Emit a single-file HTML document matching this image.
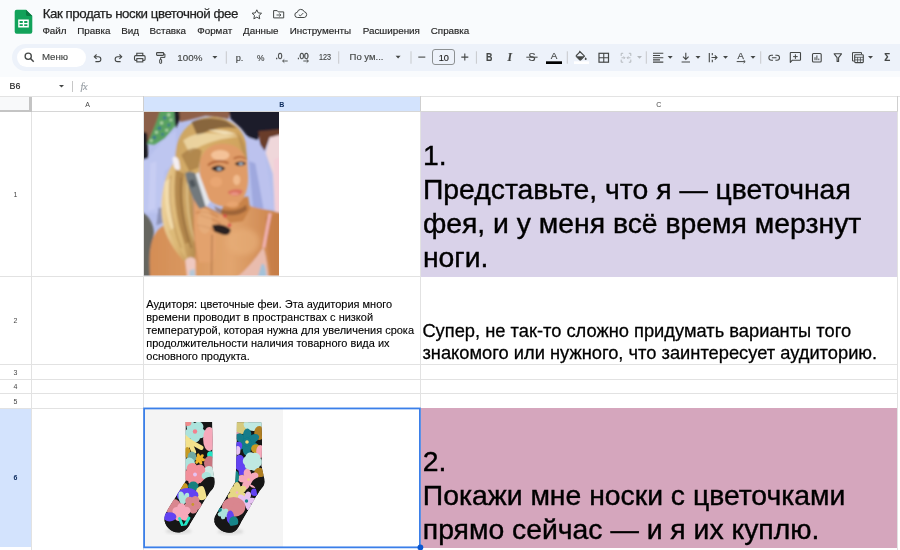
<!DOCTYPE html>
<html lang="ru">
<head>
<meta charset="utf-8">
<title>Как продать носки цветочной фее</title>
<style>
*{box-sizing:border-box;margin:0;padding:0}
html,body{width:900px;height:550px;overflow:hidden;background:#fff}
body{position:relative;will-change:transform;font-family:"Liberation Sans",sans-serif;color:#1f1f1f}
.abs{position:absolute}
#chrome{position:absolute;left:0;top:0;width:900px;height:77px;background:#f9fbfd}
#title{position:absolute;left:42.8px;top:5.9px;font-size:13.3px;line-height:16px;color:#1f1f1f;white-space:nowrap;letter-spacing:-0.46px;-webkit-text-stroke:0.25px #1f1f1f}
#menu span{position:absolute;top:24.7px;-webkit-text-stroke:0.15px #1f1f1f;font-size:9.85px;line-height:12px;color:#1f1f1f;white-space:nowrap}
#toolbar{position:absolute;left:11.5px;top:44px;width:1000px;height:27px;border-radius:13.5px;background:#edf2fa}
#search{position:absolute;left:17px;top:47.5px;width:69px;height:19px;border-radius:9.5px;background:#fff}
.tb{position:absolute;line-height:12px;color:#444746;white-space:nowrap;-webkit-text-stroke-width:0.15px}
.hl{position:absolute;background:#d3e3fd}
.ch{position:absolute;top:99.5px;font-size:7px;line-height:9px;color:#444;width:20px;margin-left:-10px;text-align:center}
.rh{position:absolute;left:5px;width:21px;font-size:7px;line-height:9px;color:#444;text-align:center;margin-top:-4.5px}
.gl{position:absolute;background:#e2e2e2}
.cell{position:absolute;white-space:nowrap;color:#000}
</style>
</head>
<body>
<div id="chrome"></div>
<div id="title">Как продать носки цветочной фее</div>
<div id="menu"><span style="left:42.4px">Файл</span><span style="left:77.2px">Правка</span><span style="left:121.2px">Вид</span><span style="left:149.5px">Вставка</span><span style="left:197.2px">Формат</span><span style="left:243px">Данные</span><span style="left:289.8px">Инструменты</span><span style="left:362.7px">Расширения</span><span style="left:430.7px">Справка</span></div>
<div id="toolbar"></div>
<div id="search"></div>

<div class="tb" style="left:41.9px;top:51px;font-size:9.7px">Меню</div>
<div class="tb" style="left:177.3px;top:51.8px;font-size:9.8px">100%</div>
<div class="tb" style="left:235.7px;top:51.5px;font-size:9.2px">р.</div>
<div class="tb" style="left:257px;top:51.5px;font-size:8.4px">%</div>
<div class="tb" style="left:275.5px;top:49.6px;font-size:8.4px;-webkit-text-stroke:0.35px #444746">.0</div>
<div class="tb" style="left:297.2px;top:49.6px;font-size:8.4px;-webkit-text-stroke:0.35px #444746;letter-spacing:-0.1px">.00</div>
<div class="tb" style="left:319.3px;top:51px;font-size:8.6px;transform:scaleX(0.84);transform-origin:0 0">123</div>
<div class="tb" style="left:349.6px;top:51.3px;font-size:9.5px">По ум...</div>
<div class="abs" style="left:432.3px;top:49.3px;width:22.4px;height:15.8px;border:1px solid #8d9193;border-radius:3px"></div>
<div class="tb" style="left:438.7px;top:51.6px;font-size:9.2px;color:#1f1f1f">10</div>
<div class="tb" style="left:485.9px;top:51.4px;font-size:11.1px;font-weight:bold;transform:scaleX(0.8);transform-origin:0 0">B</div>
<div class="tb" style="left:507.6px;top:52px;font-size:11.6px;font-style:italic;font-weight:bold;font-family:'Liberation Serif',serif">I</div>
<div class="tb" style="left:528.3px;top:51.4px;font-size:11px">S</div>
<div class="tb" style="left:550.7px;top:49.5px;font-size:9.9px">A</div>
<div class="tb" style="left:737.4px;top:50.3px;font-size:9.6px">A</div>
<div class="tb" style="left:884.2px;top:51.6px;font-size:10px;font-weight:bold">Σ</div>
<div class="tb" style="left:9.6px;top:80.3px;font-size:8.9px;color:#1f1f1f">B6</div>
<div class="tb" style="left:80.5px;top:81px;font-size:10.5px;color:#9aa0a6;font-style:italic;font-family:'Liberation Serif',serif;letter-spacing:-0.3px">fx</div>
<svg class="abs" style="left:0;top:0" width="900" height="96" viewBox="0 0 900 96"><path d="M16.7 9.8h9.3l6.3 6.3v15.6a2 2 0 0 1-2 2H16.7a2 2 0 0 1-2-2V11.8a2 2 0 0 1 2-2z" fill="#12a25a"/>
<path d="M26 9.8l6.3 6.3h-4.6a1.7 1.7 0 0 1-1.7-1.7z" fill="#0b7a43"/>
<path d="M18.2 19.6h10.6v7.9H18.2z M19.6 21v1.9h3.2V21z M24.2 21v1.9h3.2V21z M19.6 24.2v1.9h3.2v-1.9z M24.2 24.2v1.9h3.2v-1.9z" fill="#fff" fill-rule="evenodd"/>
<path d="M256.8 9.8l1.45 3.05 3.3.4-2.45 2.25.65 3.3-2.95-1.65-2.95 1.65.65-3.3-2.45-2.25 3.3-.4z" fill="none" stroke="#444746" stroke-width="1" stroke-linejoin="round"/>
<path d="M273.6 10.6h3.6l1.1 1.3h5.4v6h-10.1z" fill="none" stroke="#444746" stroke-width="1" stroke-linejoin="round"/>
<path d="M276.5 15h4.2 M279.3 13.4l1.6 1.6-1.6 1.6" fill="none" stroke="#444746" stroke-width="0.9"/>
<path d="M297.6 17.5a2.6 2.6 0 0 1-.3-5.2 3.6 3.6 0 0 1 6.9-.6 2.95 2.95 0 0 1 .1 5.8z" fill="none" stroke="#444746" stroke-width="1" stroke-linejoin="round"/>
<path d="M298.8 14.6l1.5 1.4 3-3" fill="none" stroke="#444746" stroke-width="0.9"/>
<circle cx="28.2" cy="56.2" r="3.1" fill="none" stroke="#444746" stroke-width="1.3"/><path d="M30.5 58.5l3.2 3.2" stroke="#444746" stroke-width="1.5" fill="none"/>
<path d="M94.5 56.7h3.9a2.45 2.45 0 0 1 0 4.9h-3" fill="none" stroke="#444746" stroke-width="1.1"/><path d="M96.6 54.5l-2.3 2.2 2.3 2.2" fill="none" stroke="#444746" stroke-width="1.1"/>
<path d="M121.5 56.7h-3.9a2.45 2.45 0 0 0 0 4.9h3" fill="none" stroke="#444746" stroke-width="1.1"/><path d="M119.4 54.5l2.3 2.2-2.3 2.2" fill="none" stroke="#444746" stroke-width="1.1"/>
<path d="M136.8 55.6v-2.4h6v2.4" fill="none" stroke="#444746" stroke-width="1.1"/><rect x="134.5" y="55.6" width="10.6" height="4.8" rx="1.2" fill="none" stroke="#444746" stroke-width="1.1"/><rect x="136.8" y="58.6" width="6" height="3.3" fill="#edf2fa" stroke="#444746" stroke-width="1.1"/>
<rect x="156.6" y="52.6" width="7" height="2.8" rx="0.6" fill="none" stroke="#444746" stroke-width="1.1"/><path d="M163.6 54h1.3v3.4h-4.3v2" fill="none" stroke="#444746" stroke-width="1"/><rect x="159.7" y="59.4" width="1.9" height="3.9" rx="0.4" fill="none" stroke="#444746" stroke-width="1"/>
<polygon points="212.4,56.0 217.4,56.0 214.9,58.7" fill="#444746"/>
<rect x="225.8" y="51.3" width="1" height="12.4" fill="#c7c9cc"/>
<rect x="338.2" y="51.3" width="1" height="12.4" fill="#c7c9cc"/>
<rect x="410.5" y="51.3" width="1" height="12.4" fill="#c7c9cc"/>
<rect x="475.9" y="51.3" width="1" height="12.4" fill="#c7c9cc"/>
<rect x="566.8" y="51.3" width="1" height="12.4" fill="#c7c9cc"/>
<rect x="645.8" y="51.3" width="1" height="12.4" fill="#c7c9cc"/>
<rect x="760.2" y="51.3" width="1" height="12.4" fill="#c7c9cc"/>
<path d="M287.7 61h-5 M284.3 59.4l-1.7 1.6 1.7 1.6" fill="none" stroke="#444746" stroke-width="0.9"/>
<path d="M303.3 61h5 M306.7 59.4l1.7 1.6-1.7 1.6" fill="none" stroke="#444746" stroke-width="0.9"/>
<polygon points="395.6,55.7 400.6,55.7 398.1,58.400000000000006" fill="#444746"/>
<path d="M418.3 57.1h7" stroke="#444746" stroke-width="1.1"/>
<path d="M461.3 57.1h7 M464.8 53.6v7" stroke="#444746" stroke-width="1.1"/>
<path d="M526.3 57.2h11.3" stroke="#444746" stroke-width="1"/>
<rect x="546" y="61.3" width="16" height="2.7" fill="#000"/>
<path d="M579.3 51l5.2 5.2-3.7 3.7a0.8 0.8 0 0 1-1.1 0l-3.3-3.3a0.8 0.8 0 0 1 0-1.1l3.8-3.8" fill="none" stroke="#444746" stroke-width="1.1" stroke-linejoin="round"/>
<path d="M576.3 56.2h8l-3.6 3.6a0.8 0.8 0 0 1-1.1 0z" fill="#444746"/>
<path d="M585.7 57.3c.6.8 1 1.3 1 1.8a1 1 0 0 1-2 0c0-.5.4-1 1-1.8z" fill="#444746"/>
<rect x="574" y="61.3" width="15" height="2.7" fill="#fff"/>
<rect x="599" y="53.3" width="9.5" height="8.9" fill="none" stroke="#444746" stroke-width="1.2"/><path d="M603.75 53.3v8.9 M599 57.75h9.5" stroke="#444746" stroke-width="1.1"/>
<path d="M623.2 53.3h-2v2.6 M621.2 59.6v2.6h2 M628.8 53.3h2v2.6 M630.8 59.6v2.6h-2" fill="none" stroke="#b4b9bd" stroke-width="1"/><path d="M621.5 57.75h3.3 M623.6 56.4l1.3 1.35-1.3 1.35 M630.5 57.75h-3.3 M628.4 56.4l-1.3 1.35 1.3 1.35" fill="none" stroke="#b4b9bd" stroke-width="0.9"/>
<polygon points="637,56 642,56 639.5,58.7" fill="#b4b9bd"/>
<path d="M653 53.3h10.3 M653 55.5h7 M653 57.7h10.3 M653 59.9h7 M653 62.1h10.3" stroke="#444746" stroke-width="1.1"/>
<polygon points="667.7,56.0 672.7,56.0 670.2,58.7" fill="#444746"/>
<path d="M685.8 52.8v6.4 M683 56.6l2.8 2.8 2.8-2.8 M681.6 62h8.4" fill="none" stroke="#444746" stroke-width="1.1"/>
<polygon points="695.5,56.0 700.5,56.0 698.0,58.7" fill="#444746"/>
<path d="M709.3 53v9.2 M712.3 53v2.2 M712.3 59.8v2.4 M711.5 57.5h5.3 M714.8 55.4l2.2 2.1-2.2 2.1" fill="none" stroke="#444746" stroke-width="1.1"/>
<polygon points="723,56.0 728.0,56.0 725.5,58.7" fill="#444746"/>
<path d="M736.7 61.6h8 M743.6 60.2l1.6 1.4-1.6 1.4" fill="none" stroke="#444746" stroke-width="1"/>
<polygon points="750.5,56.0 755.5,56.0 753.0,58.7" fill="#444746"/>
<path d="M773 55.2h-1.6a2.5 2.5 0 0 0 0 5h1.6 M775.4 55.2h1.6a2.5 2.5 0 0 1 0 5h-1.6 M771.9 57.7h4.6" fill="none" stroke="#444746" stroke-width="1.1"/>
<path d="M790.3 62.3v-9.2a.6.6 0 0 1 .6-.6h9a.6.6 0 0 1 .6.6v6.6a.6.6 0 0 1-.6.6h-7.8z" fill="none" stroke="#444746" stroke-width="1.1" stroke-linejoin="round"/><path d="M795.4 54.3v4.6 M793.1 56.6h4.6" stroke="#444746" stroke-width="1"/>
<rect x="812.5" y="53.5" width="8.7" height="8.5" rx="1" fill="none" stroke="#444746" stroke-width="1.1"/><path d="M815 60.2v-3 M816.9 60.2v-4.8 M818.8 60.2v-1.6" stroke="#444746" stroke-width="1"/>
<path d="M834.2 53.8h7.3l-2.9 3.8v3.8h-1.5v-3.8z" fill="none" stroke="#444746" stroke-width="1.1" stroke-linejoin="round"/>
<path d="M854 61h-1.5v-8.4h9v1.6" fill="none" stroke="#444746" stroke-width="1"/><rect x="854.7" y="54.8" width="8.6" height="7.8" rx="0.8" fill="none" stroke="#444746" stroke-width="1.1"/><path d="M854.7 57.3h8.6 M854.7 59.9h8.6 M857.6 57.3v5.3 M860.4 57.3v5.3" stroke="#444746" stroke-width="0.8"/>
<polygon points="868,56.0 873.0,56.0 870.5,58.7" fill="#444746"/>
<polygon points="59,85 64,85 61.5,87.6" fill="#444746"/>
<rect x="72" y="81" width="1" height="11" fill="#c7c7c7"/></svg>
<div class="gl" style="left:0;top:95.6px;width:900px;height:1px;background:#e3e3e3"></div>
<div class="abs" style="left:0;top:96.5px;width:31.6px;height:15.5px;background:#f8f9fa"></div>
<div class="hl" style="left:143.5px;top:96.5px;width:276.7px;height:15.5px"></div>
<div class="hl" style="left:0;top:408.0px;width:31.6px;height:139.29999999999995px"></div>
<div class="abs" style="left:420.2px;top:112.3px;width:477.40000000000003px;height:164.20000000000002px;background:#d9d2e9"></div>
<div class="abs" style="left:420.2px;top:408.3px;width:477.40000000000003px;height:139.49999999999994px;background:#d5a6bd"></div>
<div class="gl" style="left:0;top:275.8px;width:897.6px;height:1px"></div>
<div class="gl" style="left:0;top:363.8px;width:897.6px;height:1px"></div>
<div class="gl" style="left:0;top:378.7px;width:897.6px;height:1px"></div>
<div class="gl" style="left:0;top:393.1px;width:897.6px;height:1px"></div>
<div class="gl" style="left:0;top:407.5px;width:897.6px;height:1px"></div>
<div class="gl" style="left:31.1px;top:112px;width:1px;height:438px"></div>
<div class="gl" style="left:143.0px;top:112px;width:1px;height:438px"></div>
<div class="gl" style="left:419.7px;top:112px;width:1px;height:438px"></div>
<div class="gl" style="left:897.1px;top:112px;width:1px;height:438px"></div>
<div class="gl" style="left:143.0px;top:96px;width:1px;height:16px;background:#cfcfcf"></div>
<div class="gl" style="left:419.7px;top:96px;width:1px;height:16px;background:#cfcfcf"></div>
<div class="gl" style="left:897.1px;top:96px;width:1px;height:16px;background:#cfcfcf"></div>
<div class="gl" style="left:0;top:111px;width:897.6px;height:1px;background:#d6d6d6"></div>
<div class="abs" style="left:29.2px;top:96.5px;width:2.6px;height:15.7px;background:#c4c4c4"></div>
<div class="abs" style="left:0;top:109.6px;width:31.8px;height:2.6px;background:#c4c4c4"></div>
<div class="abs" style="left:420.7px;top:112px;width:476.40000000000003px;height:164.6px;background:#d9d2e9"></div>
<div class="abs" style="left:420.7px;top:408px;width:476.40000000000003px;height:139.7px;background:#d5a6bd"></div>
<div class="ch" style="left:87.55px">A</div>
<div class="ch" style="left:281.85px;font-weight:bold;color:#0b2a5c">B</div>
<div class="ch" style="left:658.9px">C</div>
<div class="rh" style="top:194.45000000000002px">1</div>
<div class="rh" style="top:320.6px">2</div>
<div class="rh" style="top:372.05px">3</div>
<div class="rh" style="top:386.7px">4</div>
<div class="rh" style="top:401.1px">5</div>
<div class="rh" style="top:477.95px;font-weight:bold;color:#0b2a5c">6</div>
<div class="cell" style="left:422.9px;top:138.48px;font-size:28.35px;line-height:34px;-webkit-text-stroke:0.4px #000">1.</div>
<div class="cell" style="left:422.9px;top:172.48px;font-size:28.35px;line-height:34px;-webkit-text-stroke:0.4px #000">Представьте, что я — цветочная</div>
<div class="cell" style="left:422.9px;top:206.48px;font-size:28.35px;line-height:34px;-webkit-text-stroke:0.4px #000">фея, и у меня всё время мерзнут</div>
<div class="cell" style="left:422.9px;top:240.48px;font-size:28.35px;line-height:34px;-webkit-text-stroke:0.4px #000">ноги.</div>
<div class="cell" style="left:146.3px;top:298.00px;font-size:10.98px;line-height:13px;-webkit-text-stroke:0.12px #000">Аудиторя: цветочные феи. Эта аудитория много</div>
<div class="cell" style="left:146.3px;top:311.00px;font-size:10.98px;line-height:13px;-webkit-text-stroke:0.12px #000">времени проводит в пространствах с низкой</div>
<div class="cell" style="left:146.3px;top:324.00px;font-size:10.98px;line-height:13px;-webkit-text-stroke:0.12px #000">температурой, которая нужна для увеличения срока</div>
<div class="cell" style="left:146.3px;top:337.00px;font-size:10.98px;line-height:13px;-webkit-text-stroke:0.12px #000">продолжительности наличия товарного вида их</div>
<div class="cell" style="left:146.3px;top:350.00px;font-size:10.98px;line-height:13px;-webkit-text-stroke:0.12px #000">основного продукта.</div>
<div class="cell" style="left:422.4px;top:319.96px;font-size:18.31px;line-height:22px;-webkit-text-stroke:0.28px #000">Супер, не так-то сложно придумать варианты того</div>
<div class="cell" style="left:422.4px;top:341.96px;font-size:18.31px;line-height:22px;-webkit-text-stroke:0.28px #000">знакомого или нужного, что заинтересует аудиторию.</div>
<div class="cell" style="left:422.8px;top:444.48px;font-size:28.35px;line-height:34px;-webkit-text-stroke:0.4px #000">2.</div>
<div class="cell" style="left:422.8px;top:478.48px;font-size:28.35px;line-height:34px;-webkit-text-stroke:0.4px #000">Покажи мне носки с цветочками</div>
<div class="cell" style="left:422.8px;top:512.48px;font-size:28.35px;line-height:34px;-webkit-text-stroke:0.4px #000">прямо сейчас — и я их куплю.</div>
<svg class="abs" style="left:144px;top:112px" width="135" height="163.6" viewBox="0 0 135 163.1" preserveAspectRatio="none">
<defs><filter id="b1" x="-5%" y="-5%" width="110%" height="110%"><feGaussianBlur stdDeviation="0.9"/></filter><filter id="b3" x="-20%" y="-20%" width="140%" height="140%"><feGaussianBlur stdDeviation="2.4"/></filter><clipPath id="c1"><rect width="135" height="163.1"/></clipPath>
<linearGradient id="skin" x1="0" y1="0" x2="1" y2="0"><stop offset="0" stop-color="#d48d55"/><stop offset="0.35" stop-color="#db9a62"/><stop offset="0.62" stop-color="#e2a56f"/><stop offset="1" stop-color="#c98049"/></linearGradient>
<linearGradient id="hair" x1="0" y1="0" x2="1" y2="0.4"><stop offset="0" stop-color="#c9a262"/><stop offset="0.5" stop-color="#d6ad68"/><stop offset="1" stop-color="#cfa25c"/></linearGradient>
<linearGradient id="pony" x1="0" y1="0" x2="1" y2="0"><stop offset="0" stop-color="#ecd09a"/><stop offset="0.45" stop-color="#dcb674"/><stop offset="1" stop-color="#b48a4e"/></linearGradient>
</defs>
<g clip-path="url(#c1)">
<rect width="135" height="163.1" fill="#b6bfec"/>
<g filter="url(#b1)"><g transform="translate(-2,-2.4) scale(1.03)">
<polygon points="0,0 22,0 14,20 6,32 0,30" fill="#8b6148"/>
<polygon points="0,21 5,23 6,47 0,49" fill="#1b1a20"/>
<polygon points="18,0 31,0 32,16 22,28 12,34 5,33 9,24 14,12" fill="#58a160"/>
<g fill="#2f5fa8" opacity="0.75"><circle cx="22" cy="8" r="1.6"/><circle cx="17" cy="18" r="1.7"/><circle cx="26" cy="15" r="1.4"/><circle cx="12" cy="27" r="1.6"/><circle cx="20" cy="24" r="1.3"/></g>
<g fill="#d9f0c8" opacity="0.8"><circle cx="26" cy="5" r="1.5"/><circle cx="19" cy="13" r="1.4"/><circle cx="24" cy="20" r="1.3"/><circle cx="14" cy="22" r="1.3"/><circle cx="9" cy="30" r="1.3"/><circle cx="28" cy="10" r="1.2"/></g>
<polygon points="31,0 37,0 37,9 33,18 32,14" fill="#1b1a22"/>
<polygon points="36,0 86,0 84,9 62,6 46,10 37,12" fill="#8f6048"/>
<polygon points="84,0 135,0 135,22 115,22 112,30 104,28 96,18 86,9" fill="#1f1f2c"/>
<polygon points="113,21 135,19 135,26 124,27 119,40 115,36" fill="#6b3c2a"/>
<polygon points="120,42 124,27 135,24 135,101 129,99 127,62" fill="#efd7da"/>
<polygon points="128,48 135,46 135,98 129,98" fill="#f3cfd8"/>
<polygon points="101,26 112,30 119,40 122,60 128,96 116,96 106,60" fill="#bcc2ee"/>
<polygon points="104,50 110,52 118,96 108,96" fill="#9fa8de"/>
<polygon points="0,49 6,47 20,30 33,20 33,50 22,60 19,100 0,100" fill="#bec6f0"/>
<polygon points="8,52 14,50 13,96 6,98" fill="#c9cef4" opacity="0.8"/>
<polygon points="16,95 26,95 24,108 14,112" fill="#8c93b8"/>
<path d="M0,99 L2,100 C7,104 12,112 11.5,120 C10,130 7,136 8,146 L9,163.1 L0,163.1Z" fill="#666660"/>
<path d="M8,163.1 C6,140 8,124 16,116 C24,109 34,108 44,110 L66,112 L84,100 L100,92 C110,95 122,97 135,100 L135,163.1Z" fill="url(#skin)"/>
<ellipse cx="98" cy="128" rx="16" ry="13" fill="#e7ae78" opacity="0.7" filter="url(#b3)"/>
<polygon points="120,104 135,100 135,163.1 126,163.1 122,135" fill="#c57c45" opacity="0.75"/>
<polygon points="80,90 103,84 105,96 98,108 84,110 76,102" fill="#c98349"/>
<path d="M70,93 C78,99 92,100 101,92 L102,97 C94,104 80,104 72,98Z" fill="#7a4a2a" opacity="0.55"/>
<path d="M55,50 C56,22 98,22 102,47 L103,66 C103,78 99,90 90,93 C80,95 70,93 64,86 C58,78 55,66 56,50Z" fill="#e09c68"/>
<ellipse cx="76" cy="44" rx="9" ry="5" fill="#f6c79d" opacity="0.9"/>
<ellipse cx="92" cy="68" rx="3.5" ry="5" fill="#f3bf92" opacity="0.9"/>
<ellipse cx="72" cy="70" rx="6" ry="5" fill="#eba974" opacity="0.8"/>
<ellipse cx="88" cy="92" rx="6" ry="3" fill="#eaa772" opacity="0.8"/>
<path d="M67,57 C71,53 77,53 81,57 C77,61 71,61 67,57Z" fill="#2c2220"/><ellipse cx="75" cy="57.5" rx="2.4" ry="1.6" fill="#9fb3c4"/>
<path d="M90,52.5 C93,49.5 98,49.5 101,52 C98,55.5 93,55.5 90,52.5Z" fill="#2c2220"/><ellipse cx="96" cy="52.5" rx="2.2" ry="1.5" fill="#9fb3c4"/>
<path d="M64,54 C70,49 78,49 84,52" fill="none" stroke="#a8572c" stroke-width="2.2" opacity="0.8"/>
<path d="M89,47.5 C93,45 98,45.5 102,48" fill="none" stroke="#a8572c" stroke-width="1.8" opacity="0.8"/>
<path d="M83,80 C88,76.5 93,76.5 98,78.5 C96,84 88,85.5 83,80Z" fill="#d9705e"/><ellipse cx="90" cy="81.5" rx="4" ry="1.5" fill="#eea090" opacity="0.8"/>
<path d="M33,52 C30,30 42,12 60,8 C78,4 97,14 101,32 L102,50 C98,38 90,33 78,33 C66,33 58,40 56,52 L55,70 L44,64 L36,56Z" fill="url(#hair)"/>
<path d="M48,12 C58,8 70,7 82,11 L92,18 C80,16 66,18 54,26Z" fill="#6f4f30" opacity="0.75"/>
<path d="M40,30 C50,22 64,22 80,24 L94,26 C80,28 62,30 46,42Z" fill="#efd9a8" opacity="0.85"/>
<path d="M64,20 C74,19 84,20 92,24 L80,24Z" fill="#f5e6c0" opacity="0.9"/>
<path d="M38,44 C46,36 54,36 58,40 L55,56 L46,60Z" fill="#a67c45" opacity="0.75"/>
<path d="M92,22 C98,28 101,36 102,48 L97,40Z" fill="#b88e52" opacity="0.8"/>
<path d="M34,48 C24,56 18,80 19,100 C20,118 28,132 40,146 L50,148 C54,136 52,120 50,104 C49,90 50,76 46,64 L38,54Z" fill="url(#pony)"/>
<path d="M33,58 C30,80 32,104 42,130 L47,128 C40,104 38,80 41,62Z" fill="#a77b43" opacity="0.75"/>
<path d="M22,70 C21,90 24,108 32,124 L30,104 C27,90 27,78 28,66Z" fill="#f4dfb0" opacity="0.85"/>
<path d="M26,118 L44,146 L38,120 L34,112Z" fill="#dcb876" opacity="0.9"/>
<path d="M38,66 C36,90 40,112 48,134" fill="none" stroke="#8a6236" stroke-width="1.6" opacity="0.6"/>
<path d="M28,64 C25,86 28,108 38,134" fill="none" stroke="#b98f52" stroke-width="1.4" opacity="0.7"/>
<path d="M44,70 C43,92 46,112 51,128" fill="none" stroke="#f0d8a2" stroke-width="1.4" opacity="0.7"/>
<path d="M29.5,47 C32,44 35,46 36,50 L37,57 C35,60 32,58 31,55Z" fill="#f4eef2"/>
<path d="M50,76 C52,72 56,72 57,77 L60,92 L74,100 C82,104 88,110 86,116 C84,122 76,122 72,118 L72,132 C72,140 70,146 68,148 L54,148 C52,136 50,124 50,112Z" fill="#e3a26d"/>
<path d="M52,100 C60,98 68,100 74,104" fill="none" stroke="#c98552" stroke-width="1.4"/>
<path d="M68,112 C74,110 82,112 86,116 C86,121 82,122 78,121 L70,118Z" fill="#2a2020"/>
<circle cx="80.500" cy="103" r="1.7" fill="#d9484c"/><circle cx="85" cy="112" r="1.7" fill="#d9484c"/>
<path d="M68,121 L67.500,160" stroke="#8a5432" stroke-width="0.8" fill="none" opacity="0.8"/>
<path d="M57,92 C62,96 70,98 76,101 M56,102 C62,104 70,106 76,110 M54,112 C60,113 66,114 70,117" fill="none" stroke="#b87344" stroke-width="1.1" opacity="0.8"/>
<path d="M50,78 L50,112 C50,124 52,136 54,148" fill="none" stroke="#c07c4a" stroke-width="1.2" opacity="0.6"/>
<ellipse cx="61" cy="108" rx="7" ry="12" fill="#eab483" opacity="0.55"/>
<path d="M42,62 C44,59 50,60 52,62 L58,80 L62,94 L56,96 C50,88 44,74 42,62Z" fill="#72797d"/>
<path d="M52,62 L55,61 L66,90 L62,94Z" fill="#e4e7eb"/>
<rect x="46.500" y="68" width="5" height="7" rx="1" transform="rotate(-20 49 71.500)" fill="#4f565b"/>
<path d="M123,100 L125.800,100.500 L119.500,134 L116.800,133.500Z" fill="#f2b4b6"/>
<path d="M118,133 C120,140 122,150 123,163.1 L91,163.1 C98,158 108,148 118,133Z" fill="#e9bcae"/>
<path d="M116,150 C118,148 120,150 121,163.1 L112,163.1Z" fill="#a5c2d9"/>
<path d="M42,146 C45,142 50,142 52,146 L52,163.1 L44,163.1Z" fill="#efc9c1"/>
<path d="M46,156 L51,154 L52,163.1 L46,163.1Z" fill="#b5c8d8"/>
</g></g></g></svg>
<svg class="abs" style="left:143.5px;top:408px" width="139.5" height="139.5" viewBox="143.5 408 139.5 139.5">
<defs><clipPath id="s1"><path d="M185 422 L211.8 422 L212.2 440 L211.8 466 C213.5 476 215 482 213.4 486.5 C212.5 489 210.5 490.5 209 492.5 L188.8 525.5 C186 530 182 532.6 177.5 532.6 C171 532.6 163.5 526 163.8 518 C164 514 168 508 175 497 L185 481 Z"/></clipPath><clipPath id="s2"><path d="M236.3 422.3 L261 422.3 L261.6 440 L261.2 466 C262.5 474 265 480 263.6 484.5 C262.8 487 260.5 488.8 259 491 L238 527 C236 530.5 233 532.8 229 532.8 C221 532.8 213 526 213.6 519 C213.9 516 217 511.5 221 505 L234.8 481.6 L235.6 466 Z"/></clipPath><filter id="sb" x="-10%" y="-10%" width="120%" height="120%"><feGaussianBlur stdDeviation="0.45"/></filter><filter id="sh"><feGaussianBlur stdDeviation="1.6"/></filter></defs>
<rect x="143.5" y="408" width="139.3" height="139.5" fill="#f4f4f4"/>
<ellipse cx="178" cy="531" rx="13" ry="3" fill="#d9d9d9" filter="url(#sh)"/><ellipse cx="230" cy="531.5" rx="13" ry="3" fill="#d9d9d9" filter="url(#sh)"/>
<g filter="url(#sb)"><g clip-path="url(#s1)">
<path d="M185 422 L211.8 422 L212.2 440 L211.8 466 C213.5 476 215 482 213.4 486.5 C212.5 489 210.5 490.5 209 492.5 L188.8 525.5 C186 530 182 532.6 177.5 532.6 C171 532.6 163.5 526 163.8 518 C164 514 168 508 175 497 L185 481 Z" fill="#141414"/>
<ellipse cx="200.1" cy="433.2" rx="5.0" ry="5.0" transform="rotate(17 200.1 433.2)" fill="#ace3dc"/><ellipse cx="194.6" cy="437.3" rx="5.0" ry="5.0" transform="rotate(89 194.6 437.3)" fill="#ace3dc"/><ellipse cx="189.0" cy="433.4" rx="5.0" ry="5.0" transform="rotate(161 189.0 433.4)" fill="#ace3dc"/><ellipse cx="191.0" cy="426.8" rx="5.0" ry="5.0" transform="rotate(233 191.0 426.8)" fill="#ace3dc"/><ellipse cx="197.9" cy="426.7" rx="5.0" ry="5.0" transform="rotate(305 197.9 426.7)" fill="#ace3dc"/><circle cx="194.5" cy="431.5" r="3.5" fill="#ace3dc"/><circle cx="194.5" cy="431.5" r="2.2" fill="#f2818f"/>
<ellipse cx="208.8" cy="439.0" rx="6.2" ry="11.9" fill="#f6a9bb"/>
<ellipse cx="187.0" cy="423.0" rx="3.9" ry="2.9" fill="#f08a8a"/>
<path d="M188.5 441L183.3 436.3" stroke="#f3e28c" stroke-width="4.6" stroke-linecap="round"/>
<path d="M188.5 441L200.8 447.7" stroke="#f3e28c" stroke-width="4.6" stroke-linecap="round"/>
<path d="M188.5 441L193.4 452.0" stroke="#f3e28c" stroke-width="4.6" stroke-linecap="round"/>
<path d="M188.5 441L185.6 449.5" stroke="#f3e28c" stroke-width="4.6" stroke-linecap="round"/>
<path d="M188.5 441L183.6 441.7" stroke="#f3e28c" stroke-width="4.6" stroke-linecap="round"/>
<ellipse cx="186.8" cy="452.5" rx="3.2" ry="5.4" fill="#c79a24"/>
<ellipse cx="202.1" cy="459.6" rx="2.7" ry="1.6" transform="rotate(11 202.1 459.6)" fill="#f1b72f"/><ellipse cx="200.0" cy="462.0" rx="2.7" ry="1.6" transform="rotate(71 200.0 462.0)" fill="#f1b72f"/><ellipse cx="196.9" cy="461.4" rx="2.7" ry="1.6" transform="rotate(131 196.9 461.4)" fill="#f1b72f"/><ellipse cx="195.9" cy="458.4" rx="2.7" ry="1.6" transform="rotate(191 195.9 458.4)" fill="#f1b72f"/><ellipse cx="198.0" cy="456.0" rx="2.7" ry="1.6" transform="rotate(251 198.0 456.0)" fill="#f1b72f"/><ellipse cx="201.1" cy="456.6" rx="2.7" ry="1.6" transform="rotate(311 201.1 456.6)" fill="#f1b72f"/><circle cx="199" cy="459" r="1.9" fill="#f1b72f"/>
<ellipse cx="191.5" cy="457.0" rx="4.4" ry="5.4" fill="#6fa9a2"/>
<ellipse cx="188.8" cy="464.2" rx="5.7" ry="6.6" fill="#ace3dc"/>
<ellipse cx="210.0" cy="454.8" rx="3.4" ry="3.6" fill="#22e6c6"/>
<ellipse cx="209.2" cy="463.0" rx="5.7" ry="6.9" fill="#c9747f"/>
<ellipse cx="208.5" cy="473.5" rx="6.4" ry="7.4" fill="#cfe9e4"/>
<ellipse cx="200.2" cy="477.6" rx="5.6" ry="5.6" transform="rotate(29 200.2 477.6)" fill="#f28f9a"/><ellipse cx="193.3" cy="480.9" rx="5.6" ry="5.6" transform="rotate(101 193.3 480.9)" fill="#f28f9a"/><ellipse cx="188.1" cy="475.3" rx="5.6" ry="5.6" transform="rotate(173 188.1 475.3)" fill="#f28f9a"/><ellipse cx="191.7" cy="468.6" rx="5.6" ry="5.6" transform="rotate(245 191.7 468.6)" fill="#f28f9a"/><ellipse cx="199.2" cy="470.0" rx="5.6" ry="5.6" transform="rotate(317 199.2 470.0)" fill="#f28f9a"/><circle cx="194.5" cy="474.5" r="3.9" fill="#f28f9a"/><circle cx="194.5" cy="474.5" r="1.9" fill="#e6c3f2"/>
<ellipse cx="206.0" cy="476.0" rx="4.9" ry="3.9" fill="#ace3dc"/>
<ellipse cx="192.8" cy="486.2" rx="5.2" ry="4.6" fill="#12807e"/>
<ellipse cx="183.5" cy="487.2" rx="3.9" ry="4.1" fill="#c79a24"/>
<ellipse cx="201.2" cy="493.2" rx="6.2" ry="7.1" fill="#f3e28c"/>
<ellipse cx="187.0" cy="495.2" rx="10.9" ry="7.1" fill="#6243f2"/>
<path d="M178 494 C178 490 184 491 183.5 496 C185 491 190 492 188.5 497 C187.5 501 184 504 182 505.5 C179 503 177.5 498 178 494Z" fill="#ace3dc"/>
<ellipse cx="197.1" cy="505.5" rx="4.2" ry="4.2" transform="rotate(11 197.1 505.5)" fill="#d9868f"/><ellipse cx="192.9" cy="509.4" rx="4.2" ry="4.2" transform="rotate(83 192.9 509.4)" fill="#d9868f"/><ellipse cx="187.8" cy="506.5" rx="4.2" ry="4.2" transform="rotate(155 187.8 506.5)" fill="#d9868f"/><ellipse cx="189.0" cy="500.9" rx="4.2" ry="4.2" transform="rotate(227 189.0 500.9)" fill="#d9868f"/><ellipse cx="194.7" cy="500.2" rx="4.2" ry="4.2" transform="rotate(299 194.7 500.2)" fill="#d9868f"/><circle cx="192.3" cy="504.5" r="3.0" fill="#d9868f"/><circle cx="192.3" cy="504.5" r="1.4" fill="#c9972b"/>
<ellipse cx="173.0" cy="507.2" rx="7.9" ry="8.1" fill="#d9868f"/>
<ellipse cx="184.1" cy="516.4" rx="4.3" ry="4.1" transform="rotate(52 184.1 516.4)" fill="#f6a9bb"/><ellipse cx="178.2" cy="516.7" rx="4.3" ry="4.1" transform="rotate(124 178.2 516.7)" fill="#f6a9bb"/><ellipse cx="176.2" cy="511.2" rx="4.3" ry="4.1" transform="rotate(196 176.2 511.2)" fill="#f6a9bb"/><ellipse cx="180.8" cy="507.5" rx="4.3" ry="4.1" transform="rotate(268 180.8 507.5)" fill="#f6a9bb"/><ellipse cx="185.7" cy="510.8" rx="4.3" ry="4.1" transform="rotate(340 185.7 510.8)" fill="#f6a9bb"/><circle cx="181" cy="512.5" r="3.0" fill="#f6a9bb"/>
<ellipse cx="169.0" cy="516.8" rx="6.9" ry="4.6" fill="#6243f2"/>
<path d="M179 518.5 L183 528 L188.5 518" fill="none" stroke="#22e6c6" stroke-width="2.8" stroke-linecap="round" stroke-linejoin="round"/>
<path d="M203 480 C207 476 212 476 216 479 L216 492 L206 497 C205 491 204 486 199.5 483.5Z" fill="#161616"/>
<path d="M160 516 C166 522 176 529 190 524.5 L190 536 L160 536Z" fill="#161616"/>
</g>
<g clip-path="url(#s2)">
<path d="M236.3 422.3 L261 422.3 L261.6 440 L261.2 466 C262.5 474 265 480 263.6 484.5 C262.8 487 260.5 488.8 259 491 L238 527 C236 530.5 233 532.8 229 532.8 C221 532.8 213 526 213.6 519 C213.9 516 217 511.5 221 505 L234.8 481.6 L235.6 466 Z" fill="#141414"/>
<ellipse cx="241.5" cy="426.5" rx="7.4" ry="7.4" fill="#d6ca7c"/>
<ellipse cx="253.0" cy="424.5" rx="9.9" ry="6.4" fill="#bfe9e2"/>
<ellipse cx="258.8" cy="433.0" rx="5.1" ry="6.9" fill="#b07f22"/>
<ellipse cx="236.5" cy="436.0" rx="2.9" ry="3.9" fill="#ef9fb0"/>
<ellipse cx="252.6" cy="445.8" rx="6.2" ry="4.1" transform="rotate(32 252.6 445.8)" fill="#127c8a"/><ellipse cx="246.3" cy="449.2" rx="6.2" ry="4.1" transform="rotate(92 246.3 449.2)" fill="#127c8a"/><ellipse cx="240.2" cy="445.4" rx="6.2" ry="4.1" transform="rotate(152 240.2 445.4)" fill="#127c8a"/><ellipse cx="240.4" cy="438.2" rx="6.2" ry="4.1" transform="rotate(212 240.4 438.2)" fill="#127c8a"/><ellipse cx="246.7" cy="434.8" rx="6.2" ry="4.1" transform="rotate(272 246.7 434.8)" fill="#127c8a"/><ellipse cx="252.8" cy="438.6" rx="6.2" ry="4.1" transform="rotate(332 252.8 438.6)" fill="#127c8a"/><circle cx="246.5" cy="442" r="4.3" fill="#127c8a"/><circle cx="246.5" cy="442" r="1.8" fill="#f1d873"/>
<ellipse cx="255.5" cy="448.8" rx="4.9" ry="4.6" fill="#c79a24"/>
<ellipse cx="259.8" cy="451.5" rx="4.1" ry="6.4" fill="#f6a9bb"/>
<ellipse cx="237.9" cy="445.8" rx="3.8" ry="4.1" fill="#6243f2"/>
<ellipse cx="237.2" cy="450.5" rx="2.7" ry="4.4" fill="#e6c3f2"/>
<ellipse cx="239.2" cy="462.8" rx="5.2" ry="8.1" fill="#6243f2"/>
<ellipse cx="242.0" cy="471.0" rx="3.9" ry="6.9" fill="#6243f2"/>
<ellipse cx="257.2" cy="462.0" rx="4.5" ry="4.9" transform="rotate(6 257.2 462.0)" fill="#bfe9e2"/><ellipse cx="254.1" cy="466.2" rx="4.5" ry="4.9" transform="rotate(66 254.1 466.2)" fill="#bfe9e2"/><ellipse cx="249.0" cy="465.7" rx="4.5" ry="4.9" transform="rotate(126 249.0 465.7)" fill="#bfe9e2"/><ellipse cx="246.8" cy="461.0" rx="4.5" ry="4.9" transform="rotate(186 246.8 461.0)" fill="#bfe9e2"/><ellipse cx="249.9" cy="456.8" rx="4.5" ry="4.9" transform="rotate(246 249.9 456.8)" fill="#bfe9e2"/><ellipse cx="255.0" cy="457.3" rx="4.5" ry="4.9" transform="rotate(306 255.0 457.3)" fill="#bfe9e2"/><circle cx="252" cy="461.5" r="3.1" fill="#bfe9e2"/>
<ellipse cx="258.8" cy="472.8" rx="5.1" ry="5.1" fill="#b07f22"/>
<ellipse cx="242.8" cy="477.8" rx="6.2" ry="3.1" fill="#a68546"/>
<ellipse cx="252.3" cy="483.5" rx="5.1" ry="3.7" transform="rotate(43 252.3 483.5)" fill="#f6a9bb"/><ellipse cx="245.5" cy="484.8" rx="5.1" ry="3.7" transform="rotate(115 245.5 484.8)" fill="#f6a9bb"/><ellipse cx="242.2" cy="478.8" rx="5.1" ry="3.7" transform="rotate(187 242.2 478.8)" fill="#f6a9bb"/><ellipse cx="246.9" cy="473.7" rx="5.1" ry="3.7" transform="rotate(259 246.9 473.7)" fill="#f6a9bb"/><ellipse cx="253.1" cy="476.6" rx="5.1" ry="3.7" transform="rotate(331 253.1 476.6)" fill="#f6a9bb"/><circle cx="248" cy="479.5" r="3.6" fill="#f6a9bb"/><circle cx="248" cy="479.5" r="1.2" fill="#f1d873"/>
<ellipse cx="235.8" cy="477.0" rx="2.7" ry="5.9" fill="#138a86"/>
<ellipse cx="241.4" cy="495.2" rx="4.8" ry="3.5" transform="rotate(29 241.4 495.2)" fill="#e6d885"/><ellipse cx="236.6" cy="498.1" rx="4.8" ry="3.5" transform="rotate(89 236.6 498.1)" fill="#e6d885"/><ellipse cx="231.7" cy="495.4" rx="4.8" ry="3.5" transform="rotate(149 231.7 495.4)" fill="#e6d885"/><ellipse cx="231.6" cy="489.8" rx="4.8" ry="3.5" transform="rotate(209 231.6 489.8)" fill="#e6d885"/><ellipse cx="236.4" cy="486.9" rx="4.8" ry="3.5" transform="rotate(269 236.4 486.9)" fill="#e6d885"/><ellipse cx="241.3" cy="489.6" rx="4.8" ry="3.5" transform="rotate(329 241.3 489.6)" fill="#e6d885"/><circle cx="236.5" cy="492.5" r="3.4" fill="#e6d885"/><circle cx="236.5" cy="492.5" r="1.3" fill="#f2b6c4"/>
<ellipse cx="254.1" cy="492.2" rx="3.7" ry="3.8" fill="#6243f2"/>
<ellipse cx="247.9" cy="505.8" rx="4.5" ry="3.0" transform="rotate(69 247.9 505.8)" fill="#e6c3f2"/><ellipse cx="242.0" cy="504.3" rx="4.5" ry="3.0" transform="rotate(141 242.0 504.3)" fill="#e6c3f2"/><ellipse cx="241.6" cy="498.2" rx="4.5" ry="3.0" transform="rotate(213 241.6 498.2)" fill="#e6c3f2"/><ellipse cx="247.3" cy="496.0" rx="4.5" ry="3.0" transform="rotate(285 247.3 496.0)" fill="#e6c3f2"/><ellipse cx="251.2" cy="500.7" rx="4.5" ry="3.0" transform="rotate(357 251.2 500.7)" fill="#e6c3f2"/><circle cx="246" cy="501" r="3.1" fill="#e6c3f2"/><circle cx="246" cy="501" r="1.7" fill="#15858a"/>
<ellipse cx="233.2" cy="507.0" rx="11.7" ry="9.9" fill="#d9868f"/>
<ellipse cx="237.5" cy="508.2" rx="6.4" ry="6.1" fill="#d9868f"/>
<ellipse cx="225.9" cy="514.7" rx="2.7" ry="2.3" transform="rotate(23 225.9 514.7)" fill="#ace3dc"/><ellipse cx="222.7" cy="516.6" rx="2.7" ry="2.3" transform="rotate(95 222.7 516.6)" fill="#ace3dc"/><ellipse cx="219.9" cy="514.2" rx="2.7" ry="2.3" transform="rotate(167 219.9 514.2)" fill="#ace3dc"/><ellipse cx="221.4" cy="510.8" rx="2.7" ry="2.3" transform="rotate(239 221.4 510.8)" fill="#ace3dc"/><ellipse cx="225.1" cy="511.1" rx="2.7" ry="2.3" transform="rotate(311 225.1 511.1)" fill="#ace3dc"/><circle cx="223" cy="513.5" r="1.9" fill="#ace3dc"/>
<ellipse cx="219.2" cy="509.8" rx="2.2" ry="2.1" fill="#15858a"/>
<ellipse cx="229.8" cy="517.2" rx="3.7" ry="6.6" fill="#6243f2"/>
<ellipse cx="233.2" cy="521.8" rx="4.6" ry="5.6" fill="#15858a"/>
<path d="M252 481 C256 476.5 262 476 267 479 L267 492 L257 496 C256 491 256 486 250 484.5Z" fill="#161616"/>
<path d="M210 517 C215 523 226 530 241 523 L241 536 L210 536Z" fill="#161616"/>
</g></g>
</svg>
<svg class="abs" style="left:0;top:400px" width="900" height="150" viewBox="0 400 900 150"><rect x="144.1" y="408.45" width="275.8" height="138.9" fill="none" stroke="#3b7fe9" stroke-width="1.8"/><circle cx="420.4" cy="547.4" r="2.9" fill="#0b57d0"/></svg>
</body>
</html>
